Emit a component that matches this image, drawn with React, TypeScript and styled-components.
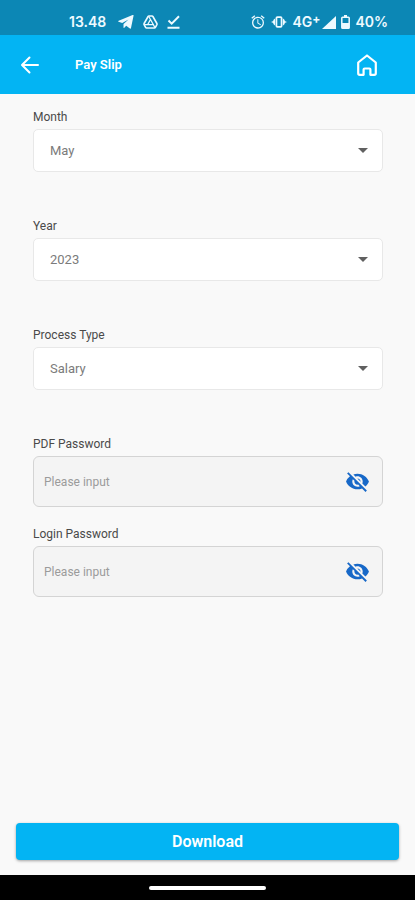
import React, { useState } from "react";
import styled, { createGlobalStyle } from "styled-components";
import { MdAlarm, MdVisibility, MdVisibilityOff } from "react-icons/md";

const GlobalStyle = createGlobalStyle`
  *, *::before, *::after { box-sizing: border-box; }
  body { margin: 0; background: #f9f9f9; font-family: Roboto, "Liberation Sans", sans-serif; }
`;

const Screen = styled.div`
  min-height: 100vh;
  display: flex;
  flex-direction: column;
  background: #f9f9f9;
`;

const StatusBar = styled.div`
  height: 35px;
  padding: 9px 27px 0 69px;
  display: flex;
  justify-content: space-between;
  background: #0c87b5;
  color: #eefaff;
  font: 600 14px/26px Inter, Roboto, sans-serif;
`;

const StatusGroup = styled.div<{ $gap: number }>`
  display: flex;
  align-items: center;
  height: 26px;
  gap: ${(p) => p.$gap}px;
  svg { display: block; flex: none; }
`;

const Clock = styled.span`
  width: 40px;
`;

const Network = styled.span`
  display: flex;
  align-items: center;
  svg { margin-left: 2px; }
`;

const NetworkPlus = styled.sup`
  height: 26px;
  font-size: 12px;
  line-height: 20px;
  font-weight: 700;
`;

const AppBar = styled.header`
  height: 59px;
  padding: 0 32px 0 14px;
  display: flex;
  align-items: center;
  background: #03b4f3;
  color: #ffffff;
`;

const IconButton = styled.button`
  width: 32px;
  height: 32px;
  padding: 0;
  border: 0;
  display: grid;
  place-items: center;
  background: none;
  color: inherit;
  cursor: pointer;
`;

const Title = styled.h1`
  flex: 1;
  margin: 0 0 0 29px;
  font-size: 13px;
  line-height: 20px;
  font-weight: 600;
`;

const Form = styled.form`
  flex: 1;
  display: flex;
  flex-direction: column;
  padding: 15px 16px;
`;

const Fields = styled.div`
  flex: 1;
  padding: 0 16px 0 17px;
`;

const Field = styled.div<{ $gap: number }>`
  margin-bottom: ${(p) => p.$gap}px;
`;

const Label = styled.label`
  display: block;
  height: 20px;
  font-size: 12px;
  line-height: 16px;
  color: #4a4a4a;
`;

const SelectWrap = styled.div`
  display: grid;
  align-items: center;
  svg {
    grid-area: 1 / 1;
    justify-self: end;
    margin-right: 15px;
    pointer-events: none;
  }
`;

const Select = styled.select`
  grid-area: 1 / 1;
  appearance: none;
  width: 100%;
  height: 43px;
  padding: 0 40px 0 16px;
  border: 1px solid #e8e8e8;
  border-radius: 5px;
  background: #ffffff;
  color: #7b7b7b;
  font: 13px Roboto, sans-serif;
`;

const PasswordBox = styled.div`
  height: 51px;
  padding: 0 9px 0 10px;
  display: flex;
  align-items: center;
  border: 1px solid #d4d4d4;
  border-radius: 6px;
  background: #f4f4f4;
  color: #1768c8;
`;

const PasswordInput = styled.input`
  flex: 1;
  min-width: 0;
  padding: 0;
  border: 0;
  outline: 0;
  background: none;
  color: #555555;
  font: 12px/20px Roboto, sans-serif;
  &::placeholder { color: #9b9b9b; opacity: 1; }
`;

const DownloadButton = styled.button`
  height: 37px;
  border: 0;
  border-radius: 4px;
  background: #03b4f3;
  color: #ffffff;
  box-shadow: 0 1px 3px rgba(0, 0, 0, 0.35);
  font: 600 16px/20px Roboto, sans-serif;
  cursor: pointer;
`;

const NavBar = styled.div`
  height: 25px;
  display: flex;
  align-items: center;
  justify-content: center;
  background: #000000;
`;

const NavHandle = styled.div`
  width: 28%;
  height: 4px;
  border-radius: 2px;
  background: #ffffff;
`;

const PlaneIcon = () => (
  <svg width="16" height="14" viewBox="0 0 16 14" fill="currentColor" aria-hidden="true">
    <path d="M15.600.6 13 13.100c-.1.600-.6.800-1.100.4L8.200 10.800l-1.900 1.900c-.4.4-.8.2-.8-.3V8.900L10.500 4.500 4.200 7.900.6 6.800C-.1 6.500 0 6 .7 5.700L14.600.1c.7-.3 1.100 0 1 .5Z" />
  </svg>
);

const DriveIcon = () => (
  <svg width="15" height="14" viewBox="0 0 15 14" fill="none" stroke="currentColor" strokeWidth="1.600" strokeLinejoin="round" aria-hidden="true">
    <path d="M5.900 1h3.200q.5 0 .8.500l4 7q.3.600 0 1.200l-1.500 2.700q-.3.600-1 .6H3.600q-.7 0-1-.6L1.100 9.700q-.3-.6 0-1.200l4-7Q5.400 1 5.900 1Z" />
    <path d="M7.500 4.500 10.400 9.700H4.600ZM5.600 1.200l1.900 3.300M1.200 9.700h3.400M12 12.800l-1.600-3.100" strokeWidth="1.300" />
  </svg>
);

const DoneIcon = () => (
  <svg width="13" height="14" viewBox="0 0 13 14" fill="none" stroke="currentColor" strokeWidth="2" aria-hidden="true">
    <path d="m1.500 5.500 3.200 3.200L12 1.200M.5 12.700h12" />
  </svg>
);

const VibrateIcon = () => (
  <svg width="16" height="12" viewBox="0 0 16 12" fill="currentColor" aria-hidden="true">
    <path d="M4 2.500v7L2.300 8V7L0 6l2.300-1V4ZM12 2.500v7L13.700 8V7L16 6l-2.300-1V4Z" />
    <rect x="5.400" y="1.200" width="5.200" height="9.600" rx="1" fill="none" stroke="currentColor" strokeWidth="1.800" />
  </svg>
);

const SignalIcon = () => (
  <svg width="14" height="13" viewBox="0 0 14 13" fill="currentColor" aria-hidden="true">
    <path d="M14 0v13H0Z" />
  </svg>
);

const BatteryIcon = () => (
  <svg width="9" height="14" viewBox="0 0 9 14" aria-hidden="true">
    <path d="M3 0h3v2H3Z" fill="currentColor" />
    <rect x=".8" y="2.300" width="7.400" height="10.900" rx=".8" fill="none" stroke="currentColor" strokeWidth="1.500" />
    <path d="M1 8h7v5H1Z" fill="currentColor" />
  </svg>
);

const BackIcon = () => (
  <svg width="20" height="18" viewBox="0 0 20 18" fill="none" stroke="currentColor" strokeWidth="2" strokeLinecap="round" strokeLinejoin="round" aria-hidden="true">
    <path d="M18 9H2.200M9.500 1.500 2 9l7.500 7.500" />
  </svg>
);

const HomeIcon = () => (
  <svg width="20" height="22" viewBox="0 0 20 22" fill="none" stroke="currentColor" strokeWidth="2.200" strokeLinejoin="round" aria-hidden="true">
    <path d="M1.200 8.500 10 1.500l8.800 7v10.800q0 1.500-1.500 1.500h-3.900v-5.300q0-1-1-1H7.600q-1 0-1 1v5.300H2.700q-1.500 0-1.500-1.500Z" />
  </svg>
);

const CaretIcon = () => (
  <svg width="10" height="5" viewBox="0 0 10 5" fill="#606060" aria-hidden="true">
    <path d="M0 0h10L5 5Z" />
  </svg>
);

type SelectFieldProps = { id: string; label: string; options: string[]; initial: string };

function SelectField({ id, label, options, initial }: SelectFieldProps) {
  return (
    <Field $gap={46}>
      <Label htmlFor={id}>{label}</Label>
      <SelectWrap>
        <Select id={id} defaultValue={initial}>
          {options.map((o) => (
            <option key={o}>{o}</option>
          ))}
        </Select>
        <CaretIcon />
      </SelectWrap>
    </Field>
  );
}

function PasswordField({ id, label }: { id: string; label: string }) {
  const [visible, setVisible] = useState(false);
  return (
    <Field $gap={19}>
      <Label htmlFor={id}>{label}</Label>
      <PasswordBox>
        <PasswordInput id={id} type={visible ? "text" : "password"} placeholder="Please input" />
        <IconButton type="button" aria-label="Toggle visibility" onClick={() => setVisible(!visible)}>
          {visible ? <MdVisibility size={25} /> : <MdVisibilityOff size={25} />}
        </IconButton>
      </PasswordBox>
    </Field>
  );
}

export default function App() {
  return (
    <Screen>
      <GlobalStyle />
      <StatusBar>
        <StatusGroup $gap={9}>
          <Clock>13.48</Clock>
          <PlaneIcon />
          <DriveIcon />
          <DoneIcon />
        </StatusGroup>
        <StatusGroup $gap={5}>
          <MdAlarm size={16} />
          <VibrateIcon />
          <Network>
            4G<NetworkPlus>+</NetworkPlus>
            <SignalIcon />
          </Network>
          <BatteryIcon />
          <span>40%</span>
        </StatusGroup>
      </StatusBar>
      <AppBar>
        <IconButton type="button" aria-label="Back">
          <BackIcon />
        </IconButton>
        <Title>Pay Slip</Title>
        <IconButton type="button" aria-label="Home">
          <HomeIcon />
        </IconButton>
      </AppBar>
      <Form onSubmit={(e) => e.preventDefault()}>
        <Fields>
          <SelectField id="month" label="Month" options={["April", "May", "June"]} initial="May" />
          <SelectField id="year" label="Year" options={["2022", "2023"]} initial="2023" />
          <SelectField id="process" label="Process Type" options={["Salary", "Bonus"]} initial="Salary" />
          <PasswordField id="pdf-password" label="PDF Password" />
          <PasswordField id="login-password" label="Login Password" />
        </Fields>
        <DownloadButton type="submit">Download</DownloadButton>
      </Form>
      <NavBar>
        <NavHandle />
      </NavBar>
    </Screen>
  );
}
